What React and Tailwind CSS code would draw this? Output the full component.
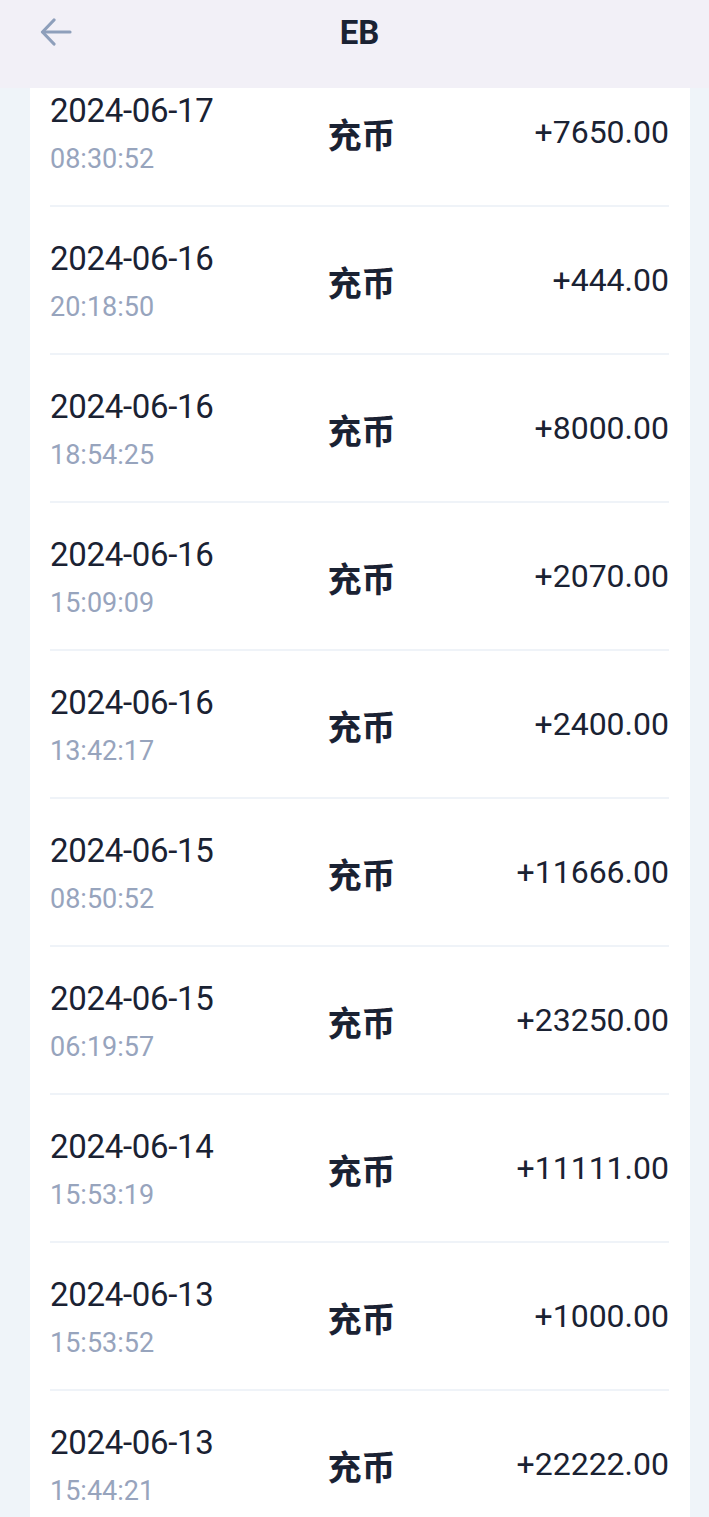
import React from 'react';

const records = [
  { date: '2024-06-17', time: '08:30:52', amount: '+7650.00' },
  { date: '2024-06-16', time: '20:18:50', amount: '+444.00' },
  { date: '2024-06-16', time: '18:54:25', amount: '+8000.00' },
  { date: '2024-06-16', time: '15:09:09', amount: '+2070.00' },
  { date: '2024-06-16', time: '13:42:17', amount: '+2400.00' },
  { date: '2024-06-15', time: '08:50:52', amount: '+11666.00' },
  { date: '2024-06-15', time: '06:19:57', amount: '+23250.00' },
  { date: '2024-06-14', time: '15:53:19', amount: '+11111.00' },
  { date: '2024-06-13', time: '15:53:52', amount: '+1000.00' },
  { date: '2024-06-13', time: '15:44:21', amount: '+22222.00' },
];

const RecordRow = ({ record }) => {
  const { date, time, amount } = record;

  return (
    <div className="h-[148px] flex items-center border-b-2 border-[#eff3f8]">
      {/* Date + time */}
      <div className="w-[230px] flex flex-col pt-[4px]">
        <span className="text-[33px] leading-[40px] text-[#1a2233] tracking-[-0.3px]">{date}</span>
        <span className="mt-[10px] text-[27px] leading-[36px] text-[#97a4bd]">{time}</span>
      </div>

      {/* Type */}
      <div className="flex-1 flex justify-center pt-[8px] pl-[4px]">
        <span className="text-[34px] leading-[40px] font-bold text-[#1a2233]">充币</span>
      </div>

      {/* Amount */}
      <div className="w-[230px] text-right">
        <span className="text-[32px] leading-[40px] text-[#1a2233]">{amount}</span>
      </div>
    </div>
  );
};

export default function App() {
  return (
    <div
      className="h-[1517px] overflow-hidden bg-[#eff4f9] flex flex-col"
      style={{ fontFamily: 'Roboto, "Noto Sans CJK SC", sans-serif' }}
    >
      {/* Header */}
      <div className="h-[88px] shrink-0 bg-[#f2f0f7] relative flex items-start justify-center pl-[10px]">
        <button className="absolute left-[40px] top-[18px] w-[32px] h-[28px]">
          <svg viewBox="0 0 32 28" width="32" height="28" fill="none" stroke="#8e9fbb" strokeWidth="3.2" strokeLinecap="round" strokeLinejoin="round">
            <path d="M30 14H3" />
            <path d="M14 2L2.5 14L14 26" />
          </svg>
        </button>
        <h1 className="mt-[13px] text-[33px] leading-[40px] font-bold text-[#1a2233]">EB</h1>
      </div>

      {/* Scrolled list */}
      <div className="flex-1 overflow-hidden">
        <div className="ml-[30px] w-[660px] bg-white pl-[20px] pr-[21px] -mt-[29px]">
          {records.map((r, i) => (
            <RecordRow key={i} record={r} />
          ))}
        </div>
      </div>
    </div>
  );
}
